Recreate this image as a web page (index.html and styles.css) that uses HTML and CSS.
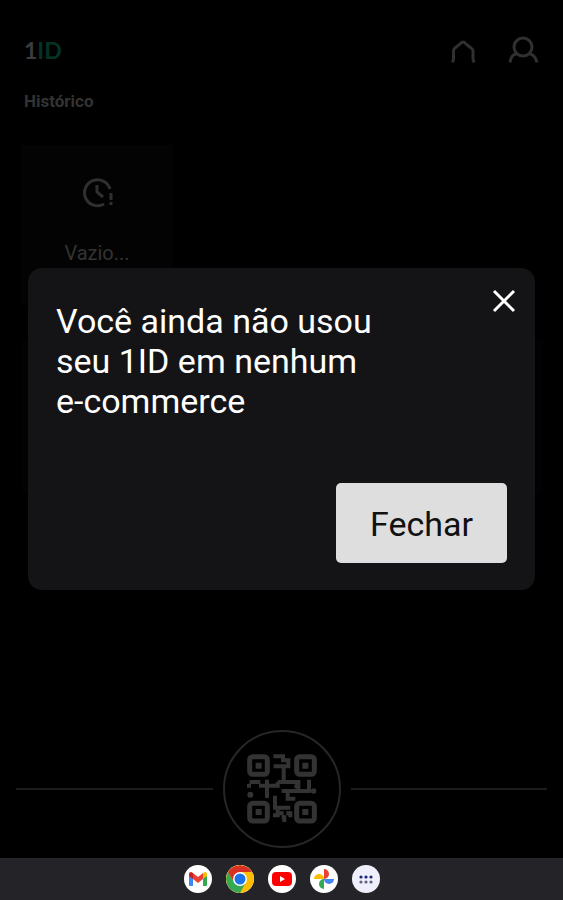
FILE: index.html
```html
<!DOCTYPE html>
<html lang="pt-BR">
<head>
  <meta charset="UTF-8" />
  <meta name="viewport" content="width=device-width, initial-scale=1.0"/>
  <title>1ID</title>
  <link rel="stylesheet" href="styles.css">
</head>
<body>

<div class="screen">
  <!-- App behind the dialog -->
  <header class="topbar">
    <div class="logo">1<span>ID</span></div>
    <div class="actions">
      <button class="icon-btn" aria-label="Início">
        <svg width="32" height="32" viewBox="0 0 32 32"><path d="M5.500 28.500L6.500 25V17Q6.500 15 8 14L12.500 10.500Q16 5.500 19.500 10.500L24 14Q26 15 26 17V25L27 28.500"/></svg>
      </button>
      <button class="icon-btn" aria-label="Perfil">
        <svg width="32" height="32" viewBox="0 0 32 32"><circle cx="16" cy="13" r="9"/><path d="M3 28.500Q4 20.500 9.500 20M22.500 20Q28 20.500 30 28.500"/></svg>
      </button>
    </div>
  </header>

  <main class="content">
    <h2>Histórico</h2>
    <div class="card">
      <svg width="34" height="32" viewBox="0 0 34 32"><path d="M30 12A13 13 0 1 0 24 27M17 8V15L23 20"/><path d="M31 16V23M31 25V28"/></svg>
      <p>Vazio...</p>
    </div>
    <div class="panel"></div>
  </main>

  <div class="scan">
    <button class="qr-btn" aria-label="Ler QR code">
      <svg width="70" height="70" viewBox="0 0 210 210">
        <g class="finders">
          <rect x="8" y="8" width="53" height="53" rx="9"/>
          <rect x="149" y="8" width="53" height="53" rx="9"/>
          <rect x="8" y="148" width="53" height="53" rx="9"/>
          <rect x="149" y="148" width="53" height="53" rx="9"/>
        </g>
        <path d="M26 26h18v18h-18zM166 26h18v18h-18zM26 165h18v18h-18zM166 165h18v18h-18z"/>
        <g class="modules">
          <path d="M79 7H108V19H130M124 13V37H80M110 37V84M92 84H154V111"/>
          <path d="M0 95H12M8 84H40M36 95H46M60 77V132M46 95H98M92 84V95"/>
          <path d="M186 77V111H104M142 97H154M122 105V134M116 134H145"/>
          <path d="M84 125V161H130M124 155V167M78 184H98M92 166V190M98 178H110M104 190H118M112 184V204M118 178H130V190"/>
        </g>
        <circle cx="10" cy="122" r="9"/>
        <circle cx="200" cy="111" r="8"/>
      </svg>
    </button>
  </div>

  <!-- Dialog -->
  <div class="overlay" id="overlay">
    <div class="dialog" role="dialog" aria-modal="true" aria-labelledby="dialogTitle">
      <button class="close" aria-label="Fechar aviso" onclick="closeDialog()">
        <svg width="24" height="24" viewBox="0 0 24 24"><path d="M2 2L22 22M22 2L2 22"/></svg>
      </button>
      <h1 id="dialogTitle">Você ainda não usou seu 1ID em nenhum <span>e-commerce</span></h1>
      <button class="btn" onclick="closeDialog()">Fechar</button>
    </div>
  </div>
</div>

<!-- Taskbar -->
<nav class="taskbar">
  <button class="app" aria-label="Gmail">
    <svg width="28" height="28" viewBox="0 0 28 28">
      <path fill="#4285f4" d="M5 10L9 13V21H6Q5 21 5 20Z"/>
      <path fill="#34a853" d="M19 13L23 10V20Q23 21 22 21H19Z"/>
      <path fill="#fbbc04" d="M19 8L21 7Q23 7 23 9V11L19 14Z"/>
      <path fill="#c5221f" d="M5 11V9Q5 7 7 7L9 8V14Z"/>
      <path fill="#ea4335" d="M9 8L14 12L19 8V14L14 18L9 14Z"/>
    </svg>
  </button>
  <button class="app" aria-label="Chrome">
    <svg width="28" height="28" viewBox="0 0 28 28">
      <circle cx="14" cy="14" r="14" fill="#fbbc04"/>
      <path fill="#34a853" d="M2 7A14 14 0 0 0 14 28L20 17L14 14L8 17Z"/>
      <path fill="#d93025" d="M2 7A14 14 0 0 1 26 7H14V14L8 17Z"/>
      <circle cx="14" cy="14" r="7" fill="#fff"/>
      <circle cx="14" cy="14" r="5.5" fill="#1a73e8"/>
    </svg>
  </button>
  <button class="app" aria-label="YouTube">
    <svg width="28" height="28" viewBox="0 0 28 28"><rect x="4" y="7" width="20" height="14" rx="4" fill="#f00"/><path fill="#fff" d="M12 11L17 14L12 17Z"/></svg>
  </button>
  <button class="app" aria-label="Fotos">
    <svg width="28" height="28" viewBox="0 0 28 28">
      <path fill="#ea4335" d="M14 4A5 5 0 0 1 14 14Z"/>
      <path fill="#4285f4" d="M24 14A5 5 0 0 1 14 14Z"/>
      <path fill="#34a853" d="M14 24A5 5 0 0 1 14 14Z"/>
      <path fill="#fbbc04" d="M4 14A5 5 0 0 1 14 14Z"/>
    </svg>
  </button>
  <button class="app apps" aria-label="Todos os apps">
    <svg width="28" height="28" viewBox="0 0 28 28">
      <g fill="#1a237e"><circle cx="9" cy="12" r="1.6"/><circle cx="14" cy="12" r="1.6"/><circle cx="19" cy="12" r="1.6"/></g>
      <g fill="#5f6380"><circle cx="9" cy="17" r="1.6"/><circle cx="14" cy="17" r="1.6"/><circle cx="19" cy="17" r="1.6"/></g>
    </svg>
  </button>
</nav>

<script>
  function closeDialog() {
    document.getElementById("overlay").style.display = "none";
  }
</script>

</body>
</html>
```
FILE: styles.css
```css
* { margin: 0; padding: 0; box-sizing: border-box; }

body {
  display: flex;
  flex-direction: column;
  min-height: 100vh;
  background: #000;
  color: #333;
  font-family: Roboto, sans-serif;
}

button {
  background: none;
  border: none;
  font-family: inherit;
  cursor: pointer;
}

svg { display: block; }

.screen {
  position: relative;
  flex: 1;
  display: flex;
  flex-direction: column;
}

.topbar {
  display: flex;
  justify-content: space-between;
  align-items: center;
  padding: 34px 24px 0;
}

.logo {
  color: #3c3c3c;
  font-family: Lato, sans-serif;
  font-size: 23px;
  font-weight: bold;
  line-height: 32px;
}

.logo span { color: #043325; }

.actions {
  display: flex;
  gap: 28px;
}

.icon-btn svg,
.card svg {
  fill: none;
  stroke: #303030;
  stroke-width: 3;
}

.content {
  flex: 1;
  padding: 23px 21px 0;
}

.content h2 {
  padding-left: 3px;
  font-size: 17px;
  line-height: 24px;
}

.card {
  display: flex;
  flex-direction: column;
  align-items: center;
  gap: 32px;
  width: 152px;
  height: 160px;
  margin-top: 32px;
  padding-top: 32px;
  background: #030303;
  font-size: 20px;
  line-height: 24px;
}

.panel {
  height: 152px;
  margin-top: 36px;
  background: #020202;
}

.scan {
  display: flex;
  align-items: center;
  gap: 10px;
  padding: 0 16px 10px;
}

.scan::before,
.scan::after {
  content: "";
  flex: 1;
  height: 2px;
  background: #1c1c1c;
}

.qr-btn {
  display: flex;
  justify-content: center;
  align-items: center;
  width: 118px;
  height: 118px;
  border: 2px solid #262626;
  border-radius: 50%;
}

.qr-btn svg { fill: #333; }

.finders rect {
  fill: none;
  stroke: #333;
  stroke-width: 15;
}

.modules {
  fill: none;
  stroke: #333;
  stroke-width: 12;
}

.overlay {
  position: absolute;
  inset: 0;
  display: flex;
  align-items: center;
  padding: 0 28px;
}

.dialog {
  position: relative;
  flex: 1;
  display: flex;
  flex-direction: column;
  gap: 62px;
  padding: 33px 28px 27px;
  background: #141416;
  border-radius: 14px;
}

.dialog h1 {
  max-width: 340px;
  color: #fff;
  font-size: 34px;
  font-weight: 400;
  line-height: 40px;
}

.dialog h1 span { white-space: nowrap; }

.close {
  position: absolute;
  top: 21px;
  right: 19px;
}

.close svg {
  stroke: #fff;
  stroke-width: 3;
}

.btn {
  align-self: flex-end;
  padding: 21px 34px 19px;
  background: #dedede;
  border-radius: 5px;
  color: #111;
  font-size: 34px;
  line-height: 40px;
}

.taskbar {
  display: flex;
  justify-content: center;
  align-items: center;
  gap: 14px;
  height: 42px;
  background: #242428;
}

.app {
  background: #fff;
  border-radius: 50%;
  overflow: hidden;
}

.apps { background: #eeeffa; }
```
